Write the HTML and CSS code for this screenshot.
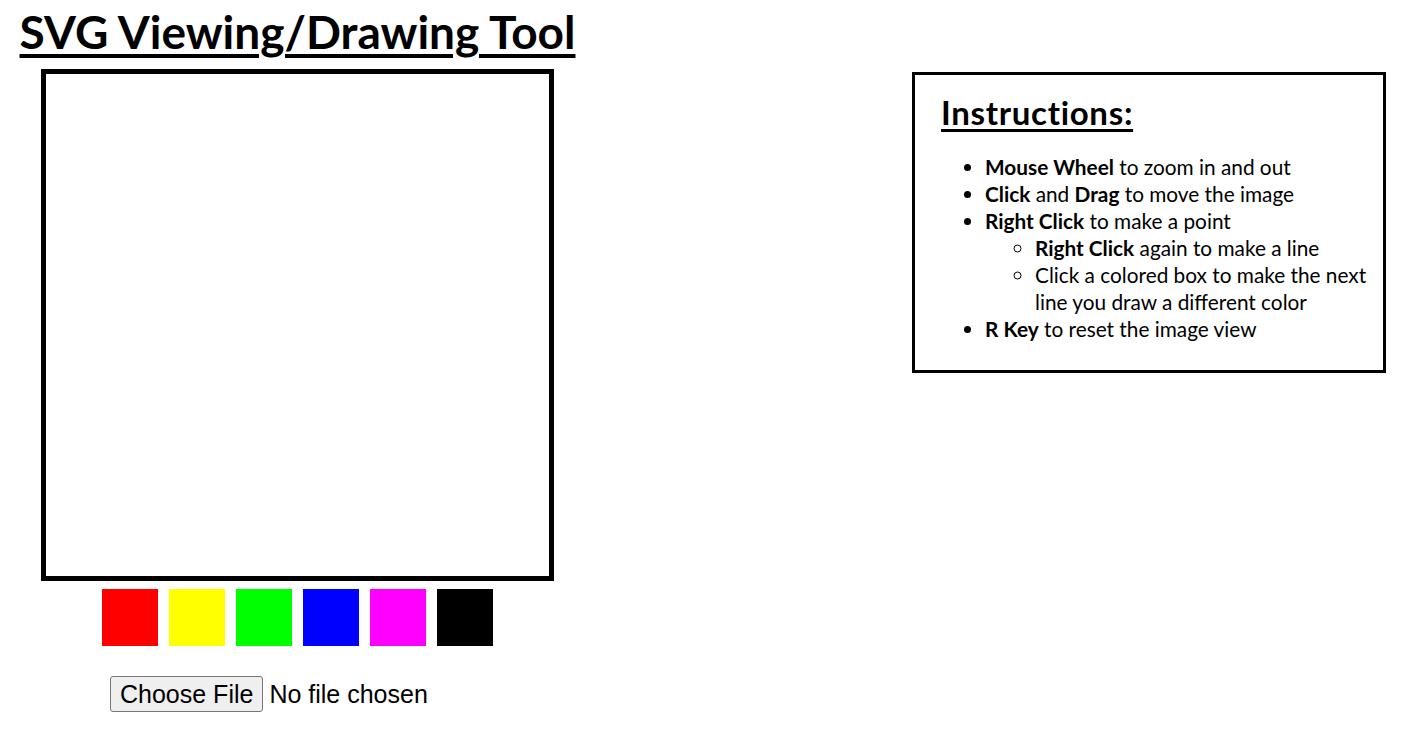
FILE: index.html
```html
<!DOCTYPE html>
<html lang="en">
<head>
<meta charset="utf-8">
<title>SVG Viewing/Drawing Tool</title>
<link rel="stylesheet" href="styles.css">
</head>
<body>
<div class="page">
  <div class="left">
    <h1 class="title">SVG Viewing/Drawing Tool</h1>
    <div class="canvas"></div>
    <div class="swatches">
      <div class="swatch red"></div>
      <div class="swatch yellow"></div>
      <div class="swatch green"></div>
      <div class="swatch blue"></div>
      <div class="swatch magenta"></div>
      <div class="swatch black"></div>
    </div>
    <div class="file-row">
      <button class="choose" type="button">Choose File</button>
      <span class="file-status">No file chosen</span>
    </div>
  </div>
  <div class="instructions">
    <h2 class="inst-title">Instructions:</h2>
    <ul class="inst-list">
      <li><b>Mouse Wheel</b> to zoom in and out</li>
      <li><b>Click</b> and <b>Drag</b> to move the image</li>
      <li><b>Right Click</b> to make a point
        <ul class="sub-list">
          <li><b>Right Click</b> again to make a line</li>
          <li>Click a colored box to make the next line you draw a different color</li>
        </ul>
      </li>
      <li><b>R Key</b> to reset the image view</li>
    </ul>
  </div>
</div>
</body>
</html>
```

FILE: styles.css
```css
html, body {
  margin: 0;
  padding: 0;
  background: #fff;
  color: #000;
}

body {
  font-family: Lato, "Liberation Sans", sans-serif;
}

.page {
  display: flex;
  justify-content: space-between;
  align-items: flex-start;
  padding: 0 21px 0 19px;
}

.left {
  width: 557px;
  display: flex;
  flex-direction: column;
  align-items: center;
}

.title {
  margin: 0;
  padding-top: 5px;
  font-size: 46px;
  line-height: 54px;
  font-weight: 700;
  text-decoration: underline;
  text-decoration-thickness: 4px;
  text-underline-offset: 5px;
  white-space: nowrap;
}

.canvas {
  margin-top: 10px;
  width: 503px;
  height: 502px;
  border: 5px solid #000;
  background: #fff;
}

.swatches {
  display: flex;
  gap: 11px;
  margin-top: 8px;
}

.swatch {
  width: 56px;
  height: 57px;
}

.red { background: #ff0000; }
.yellow { background: #ffff00; }
.green { background: #00ff00; }
.blue { background: #0000ff; }
.magenta { background: #ff00ff; }
.black { background: #000000; }

.file-row {
  align-self: flex-start;
  margin-left: 91px;
  margin-top: 30px;
  display: flex;
  align-items: center;
  gap: 6px;
  font-family: "Liberation Sans", Arial, sans-serif;
  font-size: 25px;
}

.choose {
  font-family: "Liberation Sans", Arial, sans-serif;
  font-size: 25px;
  height: 36px;
  padding: 0 9px;
  background: #efefef;
  border: 1px solid #767676;
  border-radius: 3px;
  color: #000;
  line-height: 1;
}

.file-status {
  line-height: 36px;
}

.instructions {
  margin-top: 72px;
  width: 474px;
  box-sizing: border-box;
  border: 3px solid #000;
  padding: 19px 10px 28px 26px;
}

.inst-title {
  margin: 0;
  font-size: 33px;
  letter-spacing: 0.7px;
  line-height: 36px;
  font-weight: 700;
  text-decoration: underline;
  text-decoration-thickness: 3px;
  text-underline-offset: 4px;
}

.inst-list {
  margin: 23px 0 0 0;
  padding-left: 44px;
  font-size: 20.8px;
  line-height: 27px;
}

.sub-list {
  margin: 0;
  padding-left: 50px;
  list-style-type: circle;
}

.inst-list b {
  font-weight: 700;
}
```
